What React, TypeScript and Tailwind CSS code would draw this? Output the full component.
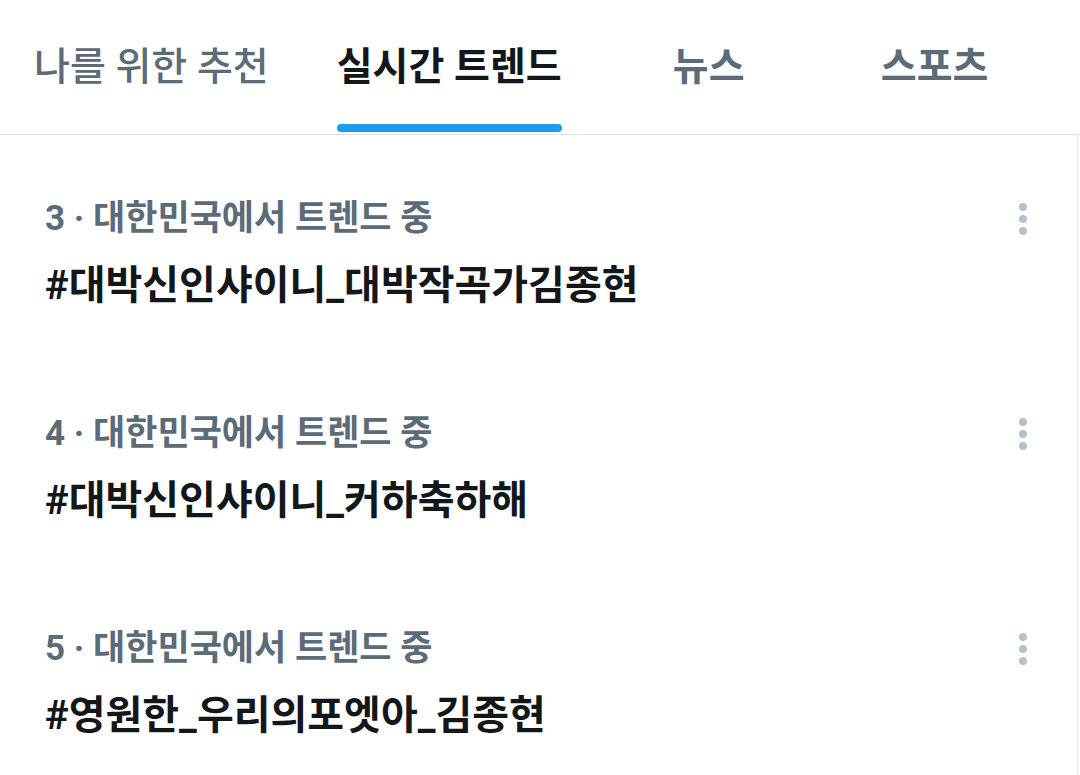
import React from 'react';

const tabs = [
  { label: '나를 위한 추천', active: false, weight: 'font-medium' },
  { label: '실시간 트렌드', active: true, weight: 'font-bold' },
  { label: '뉴스', active: false, weight: 'font-bold' },
  { label: '스포츠', active: false, weight: 'font-bold' },
];

const trends = [
  { rank: 3, title: '#대박신인샤이니_대박작곡가김종현' },
  { rank: 4, title: '#대박신인샤이니_커하축하해' },
  { rank: 5, title: '#영원한_우리의포엣아_김종현' },
];

const MoreDots: React.FC = () => (
  <div className="flex flex-col items-center gap-[4px] pt-[1px]">
    <span className="w-[8px] h-[8px] rounded-full bg-[#b5c0c9]" />
    <span className="w-[8px] h-[8px] rounded-full bg-[#b5c0c9]" />
    <span className="w-[8px] h-[8px] rounded-full bg-[#b5c0c9]" />
  </div>
);

export default function App() {
  return (
    <div
      className="w-[1080px] h-[775px] bg-white overflow-hidden"
      style={{ fontFamily: 'Roboto, "Noto Sans CJK KR", "Noto Sans", sans-serif' }}
    >
      {/* tab bar */}
      <nav className="flex h-[135px] border-b-[1.5px] border-[#dfe3e6]">
        {tabs.map((tab) => (
          <div key={tab.label} className="min-w-[226px] px-[34px] flex flex-col items-center">
            <div
              className={`h-[124px] flex items-center pt-[10px] text-[39px] leading-none whitespace-nowrap ${tab.weight} ${
                tab.active ? 'text-[#14171a]' : 'text-[#5b6b78]'
              }`}
            >
              {tab.label}
            </div>
            {tab.active && <div className="w-full h-[8px] rounded-full bg-[#1d9bf0]" />}
          </div>
        ))}
      </nav>

      {/* trend list */}
      <main className="w-[1078px] h-full border-r-[1.5px] border-[#e6e9eb]">
        {trends.map((t) => (
          <div key={t.rank} className="h-[215px] pt-[61px] pl-[45px] pr-[50px]">
            <div className="flex items-center justify-between h-[44px]">
              <span className="text-[35px] font-bold text-[#5b6b78] leading-none">
                {t.rank} · 대한민국에서 트렌드 중
              </span>
              <MoreDots />
            </div>
            <div className="mt-[24px] h-[44px] flex items-center text-[40px] font-bold text-[#14171a] leading-none">
              {t.title}
            </div>
          </div>
        ))}
      </main>
    </div>
  );
}
